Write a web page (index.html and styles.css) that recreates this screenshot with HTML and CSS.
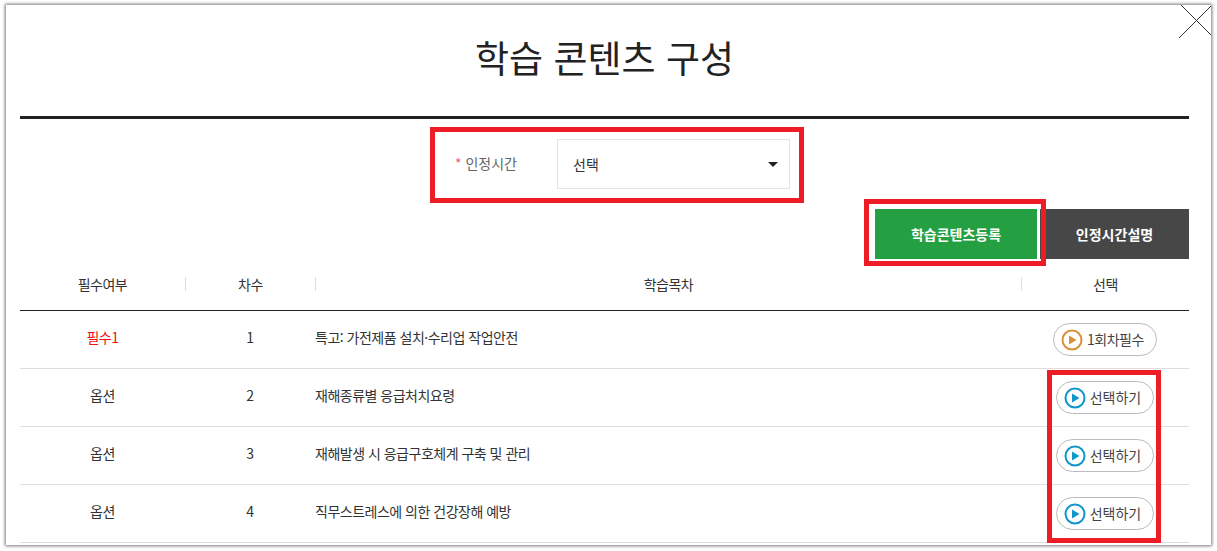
FILE: index.html

```html
<!DOCTYPE html>
<html lang="ko">
<head>
  <meta charset="UTF-8">
  <title>학습 콘텐츠 구성</title>
  <link rel="stylesheet" href="styles.css">
</head>
<body>
  <div class="modal">
    <svg class="close" width="34" height="34" viewBox="0 0 34 34">
      <path d="M4 0 L34 30 M34 1 L2 33" />
    </svg>

    <h1 class="title">학습 콘텐츠 구성</h1>

    <div class="form-row">
      <label class="form-label"><span class="star">*</span> 인정시간</label>
      <div class="select">
        <span>선택</span>
        <i class="caret"></i>
      </div>
    </div>

    <div class="actions">
      <button class="btn green">학습콘텐츠등록</button>
      <button class="btn dark">인정시간설명</button>
    </div>

    <table class="list">
      <thead>
        <tr>
          <th class="col1"><div>필수여부</div></th>
          <th class="col2"><div>차수</div></th>
          <th class="col3"><div>학습목차</div></th>
          <th class="col4"><div>선택</div></th>
        </tr>
      </thead>
      <tbody>
        <tr>
          <td class="req">필수1</td>
          <td>1</td>
          <td class="left">특고: 가전제품 설치·수리업 작업안전</td>
          <td class="cell-btn">
            <a class="pill must">
              <svg width="22" height="22" viewBox="0 0 22 22"><circle cx="11" cy="11" r="9.5" /><path d="M8 6.5 L15.5 11 L8 15.5 Z" /></svg>
              1회차필수
            </a>
          </td>
        </tr>
        <tr>
          <td>옵션</td>
          <td>2</td>
          <td class="left">재해종류별 응급처치요령</td>
          <td class="cell-btn">
            <a class="pill">
              <svg width="22" height="22" viewBox="0 0 22 22"><circle cx="11" cy="11" r="9.5" /><path d="M8 6.5 L15.5 11 L8 15.5 Z" /></svg>
              선택하기
            </a>
          </td>
        </tr>
        <tr>
          <td>옵션</td>
          <td>3</td>
          <td class="left">재해발생 시 응급구호체계 구축 및 관리</td>
          <td class="cell-btn">
            <a class="pill">
              <svg width="22" height="22" viewBox="0 0 22 22"><circle cx="11" cy="11" r="9.5" /><path d="M8 6.5 L15.5 11 L8 15.5 Z" /></svg>
              선택하기
            </a>
          </td>
        </tr>
        <tr>
          <td>옵션</td>
          <td>4</td>
          <td class="left">직무스트레스에 의한 건강장해 예방</td>
          <td class="cell-btn">
            <a class="pill">
              <svg width="22" height="22" viewBox="0 0 22 22"><circle cx="11" cy="11" r="9.5" /><path d="M8 6.5 L15.5 11 L8 15.5 Z" /></svg>
              선택하기
            </a>
          </td>
        </tr>
      </tbody>
    </table>

    <!-- red annotation boxes drawn over the page -->
    <div class="mark mark-form"></div>
    <div class="mark mark-btn"></div>
    <div class="mark mark-list"></div>
  </div>
</body>
</html>
```

FILE: styles.css

```css
* {
  box-sizing: border-box;
}
html, body {
  margin: 0;
  height: 100%;
  background: #fff;
  overflow: hidden;
}
body {
  font-family: "Noto Sans CJK KR", "Noto Sans", sans-serif;
  font-size: 14px;
  color: #333;
}
.modal {
  position: relative;
  width: 1205px;
  height: 540px;
  margin: 5px 0 0 6px;
  padding: 0 22px 0 14px;
  background: #fff;
  box-shadow: 0 0 3px 1px #777;
}
.close {
  position: absolute;
  top: 0;
  right: 0;
}
.close path {
  fill: none;
  stroke: #333;
  stroke-width: 1;
  shape-rendering: crispEdges;
}

.title {
  height: 114px;
  margin: 0;
  border-bottom: 3px solid #222;
  font-size: 37px;
  font-weight: 400;
  line-height: 105px;
  text-align: center;
  color: #222;
}

.form-row {
  display: flex;
  justify-content: center;
  align-items: center;
  margin-top: 20px;
}
.form-label {
  width: 138px;
  padding-left: 36px;
  padding-bottom: 3px;
  color: #666;
}
.star {
  color: #f0606a;
}
.select {
  display: flex;
  justify-content: space-between;
  align-items: center;
  width: 233px;
  height: 50px;
  padding: 0 11px 0 15px;
  border: 1px solid #e4e4e4;
}
.caret {
  width: 0;
  height: 0;
  border-left: 5px solid transparent;
  border-right: 5px solid transparent;
  border-top: 5px solid #222;
}

.actions {
  display: flex;
  justify-content: flex-end;
  gap: 3px;
  margin-top: 20px;
}
.btn {
  height: 50px;
  border: 0;
  padding: 0;
  font-family: inherit;
  font-size: 14px;
  font-weight: 700;
  color: #fff;
}
.green {
  width: 162px;
  background: #24a043;
}
.dark {
  width: 149px;
  background: #474747;
}

.list {
  width: 100%;
  border-collapse: collapse;
  table-layout: fixed;
  letter-spacing: -0.5px;
}
.col1 { width: 165px; }
.col2 { width: 130px; }
.col4 { width: 168px; }
.list th {
  height: 51px;
  padding: 0;
  border-bottom: 1px solid #222;
  font-weight: 400;
}
.list th div {
  height: 14px;
  line-height: 14px;
  border-left: 1px solid #ddd;
}
.list th.col1 div {
  border-left: 0;
}
.list td {
  height: 58px;
  padding: 0 0 4px;
  border-bottom: 1px solid #ddd;
  text-align: center;
}
.list td.left {
  text-align: left;
}
.list td.req {
  color: #f01010;
}
.list td.cell-btn {
  padding: 0;
}

.pill {
  display: inline-flex;
  align-items: center;
  gap: 4px;
  height: 33px;
  margin-top: 1px;
  padding: 0 12px 1px 7px;
  border: 1px solid #bbb;
  border-radius: 17px;
  color: #444;
  background: #fff;
  letter-spacing: 0;
  vertical-align: middle;
}
.pill svg {
  margin-top: 1px;
}
.pill svg circle {
  fill: none;
  stroke: #0f97cc;
  stroke-width: 2;
}
.pill svg path {
  fill: #0f97cc;
}
.pill.must {
  letter-spacing: -0.5px;
}
.pill.must svg circle {
  stroke: #d8903a;
}
.pill.must svg path {
  fill: #d8903a;
}

.mark {
  position: absolute;
  border: 5px solid #ee1c25;
}
.mark-form {
  left: 424px;
  top: 122px;
  width: 374px;
  height: 76px;
}
.mark-btn {
  left: 858px;
  top: 194px;
  width: 182px;
  height: 67px;
}
.mark-list {
  left: 1041px;
  top: 365px;
  width: 114px;
  height: 173px;
}
```
